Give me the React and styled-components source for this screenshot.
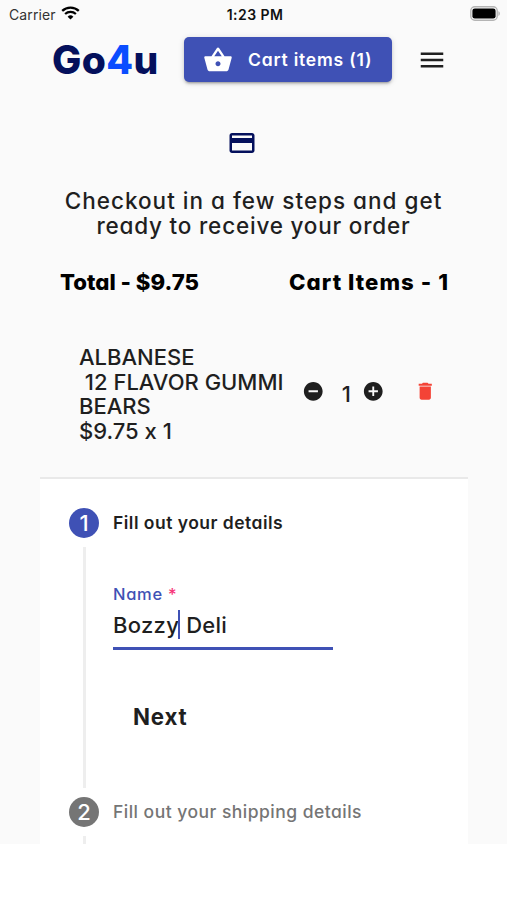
import React from 'react'
import styled, { createGlobalStyle } from 'styled-components'
import {
  MdAddCircle,
  MdDelete,
  MdMenu,
  MdPayment,
  MdRemoveCircle,
  MdShoppingBasket,
} from 'react-icons/md'

const App = () => {
  return (
    <Screen>
      <GlobalStyle />
      <StatusBar>
        <Carrier>
          Carrier
          <WifiIcon />
        </Carrier>
        <Clock>1:23 PM</Clock>
        <BatteryIcon />
      </StatusBar>
      <Header>
        <Logo>
          Go<span>4</span>u
        </Logo>
        <CartButton>
          <MdShoppingBasket size={30} />
          <span>Cart items (1)</span>
        </CartButton>
        <MenuButton>
          <MdMenu size={30} />
        </MenuButton>
      </Header>
      <Intro>
        <MdPayment size={30} color="#04105c" />
        <IntroText>
          <Line $spacing="1px">Checkout in a few steps and get</Line>
          <Line $spacing="0.8px">ready to receive your order</Line>
        </IntroText>
      </Intro>
      <Summary>
        <Line>Total - $9.75</Line>
        <Line $spacing="1.05px">Cart Items - 1</Line>
      </Summary>
      <CartItem>
        <ItemText>
          <Line>ALBANESE</Line>
          <Line>{' 12 FLAVOR GUMMI'}</Line>
          <Line>BEARS</Line>
          <Line>$9.75 x 1</Line>
        </ItemText>
        <Quantity>
          <MdRemoveCircle />
          <Count>1</Count>
          <MdAddCircle />
        </Quantity>
        <DeleteButton>
          <MdDelete />
        </DeleteButton>
      </CartItem>
      <Stepper>
        <Step>
          <StepBadge $active>1</StepBadge>
          <StepLabel $active>Fill out your details</StepLabel>
        </Step>
        <StepContent>
          <FieldLabel>
            Name <em>*</em>
          </FieldLabel>
          <Field>
            <span>Bozzy</span>
            <Caret />
            <span>Deli</span>
          </Field>
          <NextButton>Next</NextButton>
        </StepContent>
        <Step>
          <StepBadge>2</StepBadge>
          <StepLabel>Fill out your shipping details</StepLabel>
        </Step>
        <StepContent />
      </Stepper>
    </Screen>
  )
}

const WifiIcon = () => (
  <svg width="19" height="14" viewBox="0 0 19 14" fill="none" stroke="#000">
    <path d="M1.2 4.9a12 12 0 0 1 16.6 0" strokeWidth="2.3" />
    <path d="M4.1 8a7.8 7.8 0 0 1 10.8 0" strokeWidth="2.2" />
    <path d="M9.5 13.6 6.6 10.7a4.1 4.1 0 0 1 5.8 0z" fill="#000" stroke="none" />
  </svg>
)

const BatteryIcon = () => (
  <svg width="31" height="15" viewBox="0 0 31 15">
    <rect x="0.8" y="0.8" width="26.4" height="13.4" rx="4" fill="#fafafa" stroke="#b4b4b4" strokeWidth="1.4" />
    <rect x="2.4" y="2.4" width="23.2" height="10.2" rx="2.4" fill="#000" />
    <path d="M28.4 5.2c2 .7 2 4 0 4.7z" fill="#b4b4b4" />
  </svg>
)

const GlobalStyle = createGlobalStyle`
  body {
    margin: 0;
    background: #fff;
    color: #1f1f1f;
    font-family: Inter, 'Liberation Sans', sans-serif;
    font-feature-settings: 'cv11', 'calt' 0;
  }

  button {
    padding: 0;
    border: 0;
    background: none;
    color: inherit;
    font: inherit;
    font-feature-settings: inherit;
  }

  svg {
    display: block;
    flex: none;
  }
`

const Screen = styled.div`
  display: flex;
  flex-direction: column;
  width: 507px;
  height: 844px;
  overflow: hidden;
  background: #fafafa;
`

const StatusBar = styled.div`
  display: grid;
  grid-template-columns: 1fr auto 1fr;
  align-items: center;
  box-sizing: border-box;
  height: 28px;
  padding: 0 6px 0 9px;
  color: #111;
  font-size: 14px;
  font-feature-settings: normal;

  > svg {
    justify-self: end;
    margin-top: -2px;
  }
`

const Carrier = styled.div`
  display: flex;
  align-items: center;
  gap: 5px;
  color: #333;
  letter-spacing: 0.1px;

  svg {
    margin-top: -2px;
  }
`

const Clock = styled.div`
  font-weight: 600;
  letter-spacing: 0.45px;
`

const Header = styled.div`
  display: flex;
  align-items: center;
  height: 45px;
  padding: 9px 0 0 52px;
`

const Logo = styled.div`
  width: 132px;
  color: #04105c;
  font-size: 39px;
  font-weight: 800;
  letter-spacing: 0.4px;
  line-height: 45px;

  span {
    color: #0a4dff;
  }
`

const CartButton = styled.button`
  display: flex;
  align-items: center;
  gap: 15px;
  box-sizing: border-box;
  width: 208px;
  height: 45px;
  padding-left: 19px;
  border-radius: 5px;
  background: #3f51b5;
  box-shadow: 0 3px 2px -2px rgba(0, 0, 0, 0.2), 0 2px 3px rgba(0, 0, 0, 0.14),
    0 1px 6px rgba(0, 0, 0, 0.12);
  color: #fff;

  span {
    margin-top: -1px;
    font-size: 17.5px;
    font-weight: 600;
    letter-spacing: 0.8px;
    white-space: nowrap;
  }
`

const MenuButton = styled.button`
  margin-left: 25px;
`

const Intro = styled.div`
  display: flex;
  flex-direction: column;
  align-items: center;
  padding-top: 46px;

  > svg {
    margin-right: 23px;
  }
`

const IntroText = styled.div`
  margin-top: 31px;
  font-size: 22.5px;
  font-weight: 450;
  line-height: 24.5px;
  text-align: center;
`

const Line = styled.div`
  letter-spacing: ${({ $spacing }) => $spacing || 'normal'};
  white-space: pre;
`

const Summary = styled.div`
  display: flex;
  justify-content: space-between;
  margin-top: 30px;
  padding: 0 58px 0 60px;
  color: #000;
  font-size: 22.2px;
  font-weight: 800;
  line-height: 28px;
`

const CartItem = styled.div`
  display: flex;
  align-items: center;
  height: 98px;
  margin-top: 49px;
  padding-left: 79px;
  font-size: 22px;
  font-weight: 450;
  line-height: 24.5px;

  svg {
    width: 22.5px;
    height: 22.5px;
  }
`

const ItemText = styled.div`
  width: 223px;
`

const Quantity = styled.div`
  display: flex;
  align-items: center;
  margin-top: -6px;
`

const Count = styled.div`
  box-sizing: border-box;
  width: 37.5px;
  padding: 6px 0 0 6px;
  text-align: center;
`

const DeleteButton = styled.button`
  margin: -6px 0 0 29px;
  color: #f44336;
`

const Stepper = styled.div`
  flex: 1;
  min-height: 0;
  margin: 34px 39px 0 40px;
  padding: 28.5px 0 0 29px;
  border-top: 2px solid #e9e9e9;
  background: #fff;
`

const Step = styled.div`
  display: flex;
  align-items: center;
  gap: 14px;
  height: 30px;
`

const StepBadge = styled.div`
  width: 30px;
  height: 30px;
  border-radius: 50%;
  background: ${({ $active }) => ($active ? '#3f51b5' : '#757575')};
  color: #fff;
  font-size: 22px;
  font-weight: 500;
  line-height: 30px;
  text-align: center;
`

const StepLabel = styled.div`
  color: ${({ $active }) => ($active ? '#1f1f1f' : '#757575')};
  font-size: 17.5px;
  font-weight: ${({ $active }) => ($active ? 600 : 450)};
  letter-spacing: 0.48px;
  white-space: nowrap;
`

const StepContent = styled.div`
  box-sizing: border-box;
  height: 241px;
  margin: 9px 0 9px 14px;
  padding: 36px 0 0 27px;
  border-left: 3px solid #eee;
`

const FieldLabel = styled.div`
  color: #3f51b5;
  font-size: 16.5px;
  font-weight: 450;
  letter-spacing: 0.7px;
  line-height: 22px;

  em {
    color: #f73378;
    font-style: normal;
  }
`

const Field = styled.div`
  display: flex;
  align-items: center;
  box-sizing: border-box;
  width: 220px;
  height: 45px;
  padding-bottom: 1px;
  border-bottom: 3px solid #3f51b5;
  font-size: 22px;
  font-weight: 450;
  letter-spacing: 0.3px;
`

const Caret = styled.div`
  width: 2px;
  height: 29px;
  margin: -2px 6px 0 -1px;
  background: #3f51b5;
`

const NextButton = styled.button`
  display: block;
  margin: 53px 0 0 20px;
  font-size: 22.3px;
  font-weight: 700;
  letter-spacing: 0.8px;
  line-height: 28px;
`

export default App
